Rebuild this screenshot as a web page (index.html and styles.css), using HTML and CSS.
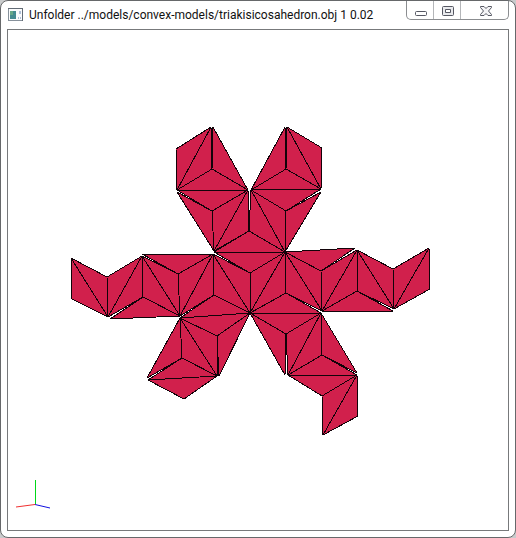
FILE: index.html
```
<!DOCTYPE html>
<html lang="en">
<head>
<meta charset="utf-8">
<meta name="viewport" content="width=device-width, initial-scale=1">
<title>Unfolder</title>
<link rel="stylesheet" href="styles.css">
</head>
<body>
<main class="window">
  <header class="titlebar">
    <svg class="app-icon" viewBox="0 0 16 14" aria-hidden="true">
      <rect x=".5" y=".5" width="14" height="12" fill="#fbfcfd" stroke="#87919b"/>
      <path d="M0 .5h15M14.5 1v12" stroke="#626b75" fill="none"/>
      <rect x="2" y="3" width="6" height="8" fill="#458b91"/>
      <path d="M2 3h3v4H2z" fill="#67a889"/>
      <path d="M10 10h1M12 3v3M12 10h1" stroke="#6682b0"/>
    </svg>
    <h1 class="title">Unfolder ../models/convex-models/triakisicosahedron.obj 1 0.02</h1>
    <div class="controls">
      <button class="control" type="button" aria-label="Minimize">
        <svg width="14" height="12" viewBox="0 0 14 12"><rect x="1.5" y="6.5" width="11" height="4" rx="1" fill="#fff" stroke="#555762"/></svg>
      </button>
      <button class="control" type="button" aria-label="Maximize">
        <svg width="14" height="12" viewBox="0 0 14 12"><path fill-rule="evenodd" d="M2.500 1.500h9q1 0 1 1v7q0 1-1 1h-9q-1 0-1-1v-7q0-1 1-1zM4.500 4.500v3h5v-3z" fill="#e9eaed" stroke="#555762"/></svg>
      </button>
      <button class="control close" type="button" aria-label="Close">
        <svg width="14" height="12" viewBox="0 0 14 12"><path d="M1.500 1.500h3.500l2 2 2-2h3.500v1l-3 3.500 3 3.500v1H9l-2-2-2 2H1.500v-1l3-3.500-3-3.500z" fill="#f4f4f6" stroke="#555762" stroke-linejoin="round"/></svg>
      </button>
    </div>
  </header>
  <section class="viewport">
    <svg class="scene" viewBox="8 30 500 500" role="img" aria-label="Unfolded triakis icosahedron">
      <g class="net">
        <path d="M211 127L176 149 177 190zM211 127L177 190 212 169zM177 190L212 169 248 190zM212 169L248 190 213 127z"/>
        <path d="M177 190L248 190 212 211zM177 192L212 211 214 251zM212 211L214 251 248 190z"/>
        <path d="M214 251L248 190 249 231zM214 252L249 231 285 252zM249 231L285 252 251 190z"/>
        <path d="M251 190L286 211 321 189zM251 190L286 211 285 252zM286 211L321 192 285 252z"/>
        <path d="M251 190L285 127 286 169zM251 190L286 169 321 189zM286 169L321 189 287 127zM287 127L322 148 321 189z"/>
        <path d="M214 252L285 252 250 273zM250 273L285 252 250 313zM250 273L213 254 250 313z"/>
        <path d="M213 254L214 295 250 313zM213 254L214 295 180 316zM214 295L250 313 180 318z"/>
        <path d="M213 254L180 316 178 274zM213 254L178 274 142 254zM178 274L180 316 142 256z"/>
        <path d="M142 256L143 297 180 316zM180 316L143 297 110 319zM142 256L143 297 108 317z"/>
        <path d="M142 256L107 277 108 317zM71 258L107 277 108 317zM71 258L108 317 72 299z"/>
        <path d="M285 252L286 293 250 313zM286 293L250 313 321 313zM285 252L286 293 322 311z"/>
        <path d="M285 252L322 311 321 271zM285 252L321 271 355 248zM321 271L322 311 357 250z"/>
        <path d="M357 250L322 311 357 291zM357 291L322 311 393 311zM357 291L357 250 394 309z"/>
        <path d="M357 250L394 309 393 269zM393 269L394 309 429 248zM429 248L394 309 430 289z"/>
        <path d="M180 318L250 313 217 336zM217 336L250 313 219 376zM217 336L180 318 217 376z"/>
        <path d="M180 318L182 358 217 376zM180 318L182 358 147 378zM182 358L217 376 148 380zM148 380L217 376 184 399z"/>
        <path d="M250 313L286 334 321 313zM250 313L286 334 285 375zM286 334L321 313 288 375z"/>
        <path d="M321 313L322 355 288 375zM321 313L322 355 357 373zM322 355L288 375 357 375zM288 375L357 375 322 396z"/>
        <path d="M357 375L322 396 323 435zM357 375L323 435 358 416z"/>
      </g>
      <g class="axes">
        <path class="axis-x" d="M35 504.500L16 507"/>
        <path class="axis-y" d="M35.500 504V480"/>
        <path class="axis-z" d="M35 504.500L50 508"/>
      </g>
    </svg>
  </section>
</main>
</body>
</html>
```
FILE: styles.css
```
* { box-sizing: border-box; }

body {
  margin: 0;
  background: #c9cbcc;
}

.window {
  display: flex;
  flex-direction: column;
  height: 100vh;
  padding: 0 6px 6px;
  border: 1px solid #66686a;
  border-radius: 8px;
  background: #fff;
}

.titlebar {
  display: flex;
  align-items: flex-start;
  height: 28px;
}

.app-icon {
  flex: none;
  width: 16px;
  height: 14px;
  margin: 7px 5px 0 1px;
}

.title {
  flex: 1;
  margin: 4px 0 0;
  overflow: hidden;
  color: #111;
  font: 400 12px/20px Roboto, sans-serif;
  white-space: nowrap;
}

.controls {
  display: flex;
  height: 19px;
  border: 1px solid #8b8d90;
  border-top: 0;
  border-radius: 0 0 5px 5px;
}

.control {
  display: flex;
  align-items: center;
  justify-content: center;
  width: 27px;
  padding: 2px 0 0 2px;
  border: 0;
  border-right: 1px solid #b4b6b9;
  background: none;
}

.control.close {
  width: 47px;
  border-right: 0;
}

.viewport {
  flex: 1;
  min-height: 0;
  border: 1px solid #77797b;
}

.scene {
  display: block;
  width: 100%;
  height: 100%;
  shape-rendering: crispEdges;
}

.net {
  fill: #d1204c;
  stroke: #120309;
  stroke-width: 1px;
  stroke-linejoin: bevel;
}

.axes {
  fill: none;
  stroke-width: 1px;
  shape-rendering: auto;
}

.axis-x { stroke: #f03030; }
.axis-y { stroke: #00d818; }
.axis-z { stroke: #1010e0; }
```
